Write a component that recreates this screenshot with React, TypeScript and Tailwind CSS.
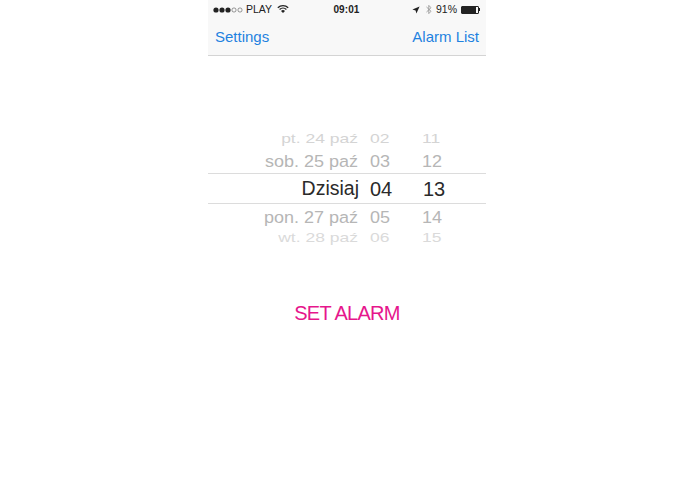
import React from "react";

const rows = [
  { d: "pt. 24 paź", h: "02", m: "11", cls: "h-[19px] text-[17.5px] text-[#d4d4d4] scale-y-[0.68]" },
  { d: "sob. 25 paź", h: "03", m: "12", cls: "h-[24px] text-[18px] text-[#b6b6b6] scale-y-[0.94]" },
];
const rowsBelow = [
  { d: "pon. 27 paź", h: "05", m: "14", cls: "h-[25px] text-[18px] text-[#b6b6b6] scale-y-[0.94]" },
  { d: "wt. 28 paź", h: "06", m: "15", cls: "h-[20px] text-[17.5px] text-[#dadada] scale-y-[0.68]" },
];

function Row({ d, h, m, cls }: { d: string; h: string; m: string; cls: string }) {
  return (
    <div className={`flex items-center leading-none ${cls}`}>
      <div className="w-[150px] text-right whitespace-nowrap">{d}</div>
      <div className="w-[35px] pl-[12px]">{h}</div>
      <div className="w-[50px] pl-[29px] whitespace-nowrap">{m}</div>
    </div>
  );
}

export default function App() {
  return (
    <div className="flex justify-center bg-white min-h-[494px] pr-[1px] font-['Liberation_Sans',Arial,sans-serif]">
      <div className="w-[278px] flex flex-col">
        <div className="h-[56px] bg-[#f8f8f8] border-b border-[#d4d4d4] flex flex-col">
          <div className="h-[19px] flex items-center justify-between pl-[5px] pr-[6px] text-[10.5px] text-[#222]">
            <div className="flex items-center w-[100px]">
              <svg width="32" height="6" viewBox="0 0 32 6" className="mr-[1px] w-[32px]">
                <circle cx="3" cy="3" r="2.6" fill="#222" />
                <circle cx="9" cy="3" r="2.6" fill="#222" />
                <circle cx="15" cy="3" r="2.6" fill="#222" />
                <circle cx="21" cy="3" r="2.1" fill="none" stroke="#555" strokeWidth="0.6" />
                <circle cx="27" cy="3" r="2.1" fill="none" stroke="#555" strokeWidth="0.6" />
              </svg>
              <span>PLAY</span>
              <svg width="12" height="10" viewBox="0 0 12 9" className="ml-[5px] mb-[1px]">
                <path d="M0.8 3.2A7.5 7.5 0 0 1 11.2 3.2M2.6 5A5 5 0 0 1 9.4 5" fill="none" stroke="#222" strokeWidth="1.3" />
                <path d="M4 6.4A2.8 2.8 0 0 1 8 6.4L6 8.6Z" fill="#222" />
              </svg>
            </div>
            <div className="font-bold text-[10px] tracking-[0.1px]">09:01</div>
            <div className="flex items-center justify-end w-[100px]">
              <svg width="8" height="8" viewBox="0 0 8 8" className="mr-[6px]">
                <path d="M7.6 0.4L4.4 7.6L3.6 4.4L0.4 3.6Z" fill="#222" />
              </svg>
              <svg width="6" height="11" viewBox="0 0 6 11" className="mr-[4px]">
                <path d="M0.5 3L5 7.3L2.8 9.6V1.4L5 3.7L0.5 8" fill="none" stroke="#999" strokeWidth="0.9" />
              </svg>
              <span className="mr-[4px]">91%</span>
              <div className="flex items-center">
                <div className="w-[18px] h-[8px] border border-[#222] rounded-[1px]">
                  <div className="h-full w-[90%] bg-[#222]" />
                </div>
                <div className="w-[1px] h-[3px] bg-[#222]" />
              </div>
            </div>
          </div>
          <div className="flex-1 flex items-center justify-between px-[7px] pt-[1px] text-[15px] text-[#1f82e0]">
            <span>Settings</span>
            <span>Alarm List</span>
          </div>
        </div>

        <div className="h-[74px]" />

        <div className="relative flex flex-col">
          {rows.map((r) => (
            <Row key={r.d} {...r} />
          ))}
          <div className="h-[31px] border-y border-[#dcdcdc] flex items-center text-[20px] text-[#2a2a2a] leading-none">
            <div className="w-[151px] text-right text-[19.5px]">Dzisiaj</div>
            <div className="w-[34px] pl-[11px]">04</div>
            <div className="pl-[30px]">13</div>
          </div>
          {rowsBelow.map((r) => (
            <Row key={r.d} {...r} />
          ))}
        </div>

        <div className="mt-[52px] text-center text-[20px] leading-[24px] tracking-[-0.7px] text-[#e6168c]">SET ALARM</div>
      </div>
    </div>
  );
}
